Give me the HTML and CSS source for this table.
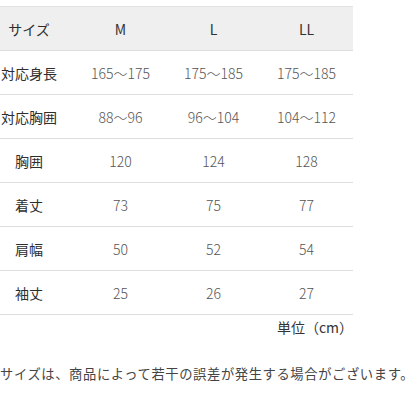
FILE: index.html
```html
<!DOCTYPE html>
<html lang="ja">
<head>
<meta charset="utf-8">
<link rel="stylesheet" href="styles.css">
</head>
<body>
<div class="page">
  <div class="table">
    <div class="row head">
      <div class="cell label">サイズ</div>
      <div class="cell">M</div>
      <div class="cell">L</div>
      <div class="cell">LL</div>
    </div>
    <div class="row">
      <div class="cell label">対応身長</div>
      <div class="cell num">165〜175</div>
      <div class="cell num">175〜185</div>
      <div class="cell num">175〜185</div>
    </div>
    <div class="row">
      <div class="cell label">対応胸囲</div>
      <div class="cell num">88〜96</div>
      <div class="cell num">96〜104</div>
      <div class="cell num">104〜112</div>
    </div>
    <div class="row">
      <div class="cell label">胸囲</div>
      <div class="cell num">120</div>
      <div class="cell num">124</div>
      <div class="cell num">128</div>
    </div>
    <div class="row">
      <div class="cell label">着丈</div>
      <div class="cell num">73</div>
      <div class="cell num">75</div>
      <div class="cell num">77</div>
    </div>
    <div class="row">
      <div class="cell label">肩幅</div>
      <div class="cell num">50</div>
      <div class="cell num">52</div>
      <div class="cell num">54</div>
    </div>
    <div class="row">
      <div class="cell label">袖丈</div>
      <div class="cell num">25</div>
      <div class="cell num">26</div>
      <div class="cell num">27</div>
    </div>
  </div>
  <div class="unit">単位（cm）</div>
  <p class="note">サイズは、商品によって若干の誤差が発生する場合がございます。</p>
</div>
</body>
</html>
```
FILE: styles.css
```css
html, body {
  margin: 0;
  padding: 0;
  background: #ffffff;
}
.page {
  padding-top: 6px;
  font-family: "Noto Sans CJK JP", "Noto Sans", sans-serif;
  color: #333333;
}
.table {
  width: 353px;
  border-top: 1px solid #e2e2e2;
}
.row {
  display: grid;
  grid-template-columns: 74px 93px 93px 93px;
  height: 43px;
  border-bottom: 1px solid #dddddd;
  align-items: center;
}
.row.head {
  background: #efefef;
}
.cell {
  text-align: center;
  font-size: 14px;
  white-space: nowrap;
}
.cell.label {
  padding-right: 16px;
  color: #2e2e2e;
}
.cell.num {
  color: #555555;
  font-weight: 300;
}
.unit {
  width: 353px;
  text-align: right;
  font-size: 14px;
  margin-top: 1px;
  line-height: 22px;
  color: #333333;
}
.note {
  margin: 26px 0 0 0;
  font-size: 13.3px;
  letter-spacing: 0.6px;
  color: #444444;
  white-space: nowrap;
  line-height: 20px;
}
```
